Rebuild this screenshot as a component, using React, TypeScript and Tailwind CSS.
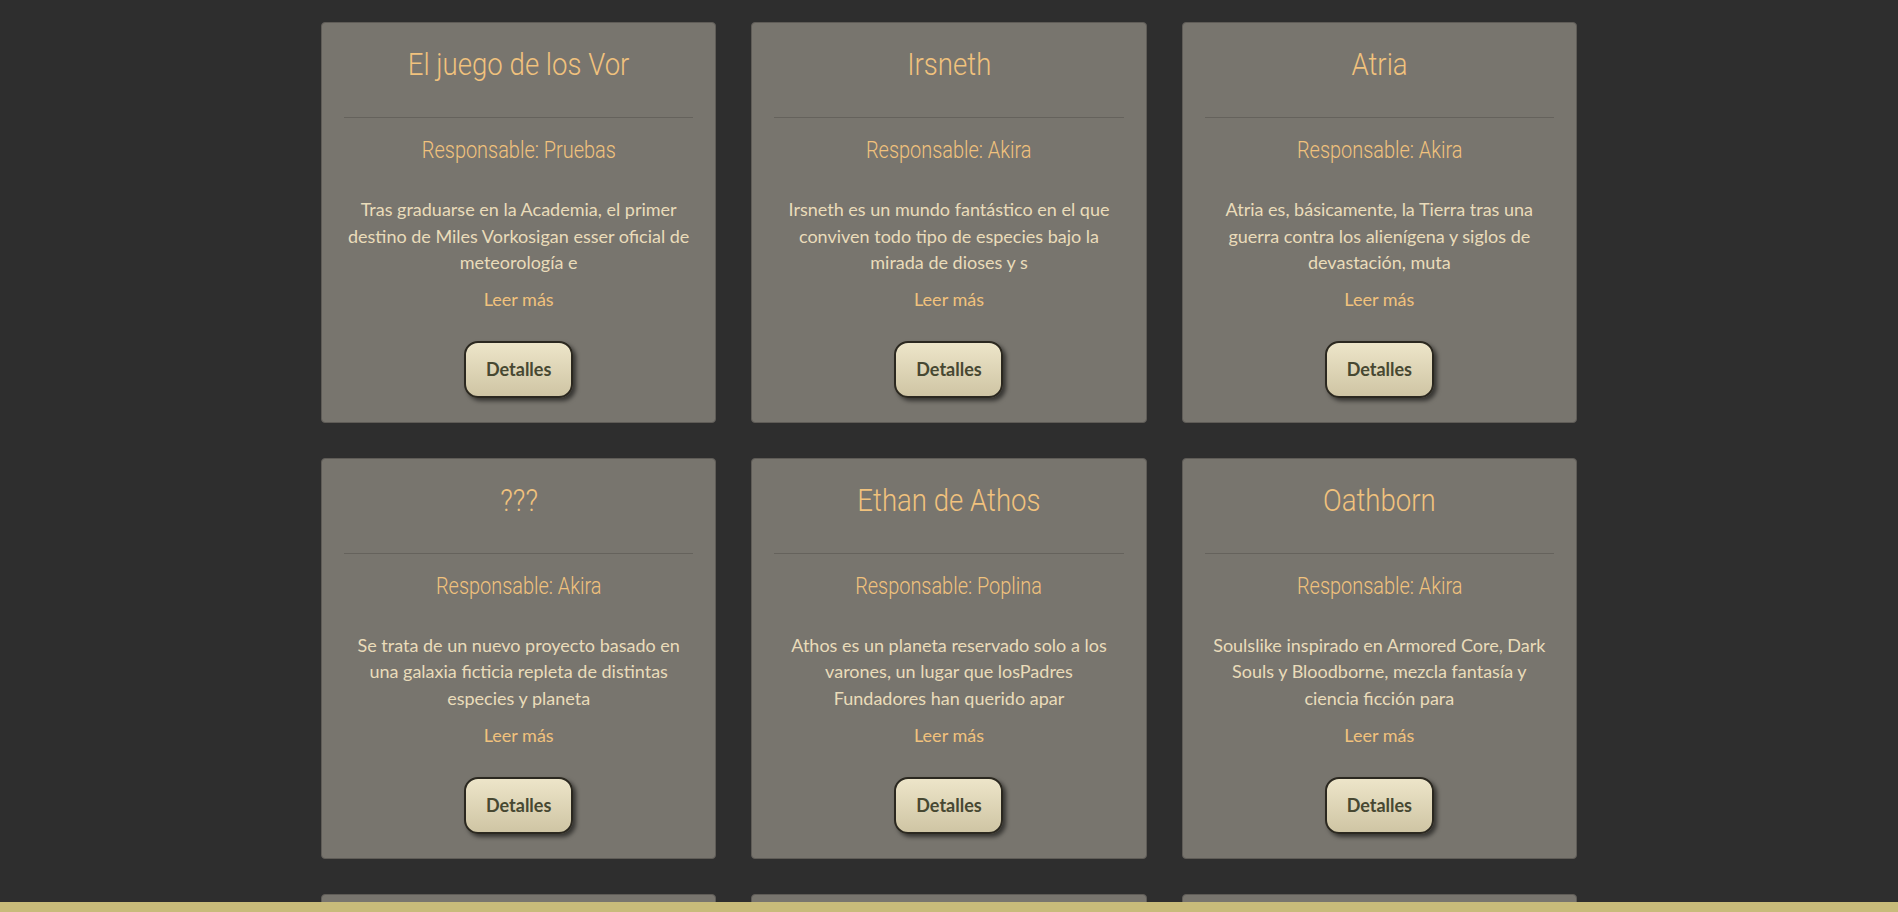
import React from "react";

interface Project {
  title: string;
  owner: string;
  summary: string[];
}

const projects: Project[] = [
  {
    title: "El juego de los Vor",
    owner: "Pruebas",
    summary: [
      "Tras graduarse en la Academia, el primer",
      "destino de Miles Vorkosigan esser oficial de",
      "meteorología e",
    ],
  },
  {
    title: "Irsneth",
    owner: "Akira",
    summary: [
      "Irsneth es un mundo fantástico en el que",
      "conviven todo tipo de especies bajo la",
      "mirada de dioses y s",
    ],
  },
  {
    title: "Atria",
    owner: "Akira",
    summary: [
      "Atria es, básicamente, la Tierra tras una",
      "guerra contra los alienígena y siglos de",
      "devastación, muta",
    ],
  },
  {
    title: "???",
    owner: "Akira",
    summary: [
      "Se trata de un nuevo proyecto basado en",
      "una galaxia ficticia repleta de distintas",
      "especies y planeta",
    ],
  },
  {
    title: "Ethan de Athos",
    owner: "Poplina",
    summary: [
      "Athos es un planeta reservado solo a los",
      "varones, un lugar que losPadres",
      "Fundadores han querido apar",
    ],
  },
  {
    title: "Oathborn",
    owner: "Akira",
    summary: [
      "Soulslike inspirado en Armored Core, Dark",
      "Souls y Bloodborne, mezcla fantasía y",
      "ciencia ficción para",
    ],
  },
  {
    title: "Nuevo mundo",
    owner: "Akira",
    summary: ["Un proyecto en preparación del que", "todavía no hay mucho que contar."],
  },
  {
    title: "Crónicas",
    owner: "Poplina",
    summary: ["Relatos cortos ambientados en los", "distintos mundos de la comunidad."],
  },
  {
    title: "Borrador",
    owner: "Pruebas",
    summary: ["Proyecto de pruebas para comprobar el", "funcionamiento de la web."],
  },
];

function ProjectCard({ project }: { project: Project }) {
  return (
    <div className="flex flex-col items-center rounded-[4px] border border-[#5f5c57] bg-[#78756e] px-[22px] pt-[23px] pb-[24px] text-center">
      <h2 className="scale-x-[0.89] whitespace-nowrap font-['Roboto',sans-serif] text-[31px] leading-[38px] font-light text-[#f1c27d]">
        {project.title}
      </h2>
      <hr className="mt-[33px] w-full border-t border-[#65625c]" />
      <h3 className="mt-[17px] scale-x-[0.83] whitespace-nowrap font-['Roboto',sans-serif] text-[24px] leading-[30px] font-light text-[#f1c27d]">
        Responsable: {project.owner}
      </h3>
      <p className="mt-[31px] font-['Lato',sans-serif] text-[18px] leading-[26.6px] text-[#eadcba]">
        {project.summary.map((line, i) => (
          <span key={i} className="block whitespace-nowrap">
            {line}
          </span>
        ))}
      </p>
      <a className="mt-[11px] font-['Lato',sans-serif] text-[18px] leading-[24px] text-[#f1c27d]">
        Leer más
      </a>
      <button className="mt-[30px] h-[57px] w-[109px] rounded-[14px] border-2 border-[#2b2820] bg-gradient-to-b from-[#ede5c9] to-[#cfc5a4] font-['Lato',sans-serif] text-[18px] font-bold text-[#474832] shadow-[3px_3px_4px_rgba(0,0,0,0.55)]">
        Detalles
      </button>
    </div>
  );
}

export default function App() {
  return (
    <div className="min-h-screen bg-[#2e2e2e] pt-[22px] pb-[40px]">
      <div className="mx-auto grid w-[1256px] grid-cols-3 gap-x-[35px] gap-y-[35px]">
        {projects.map((p) => (
          <ProjectCard key={p.title} project={p} />
        ))}
      </div>
      <div className="fixed bottom-0 left-0 h-[10px] w-full bg-[#c8bb7a]" />
    </div>
  );
}
